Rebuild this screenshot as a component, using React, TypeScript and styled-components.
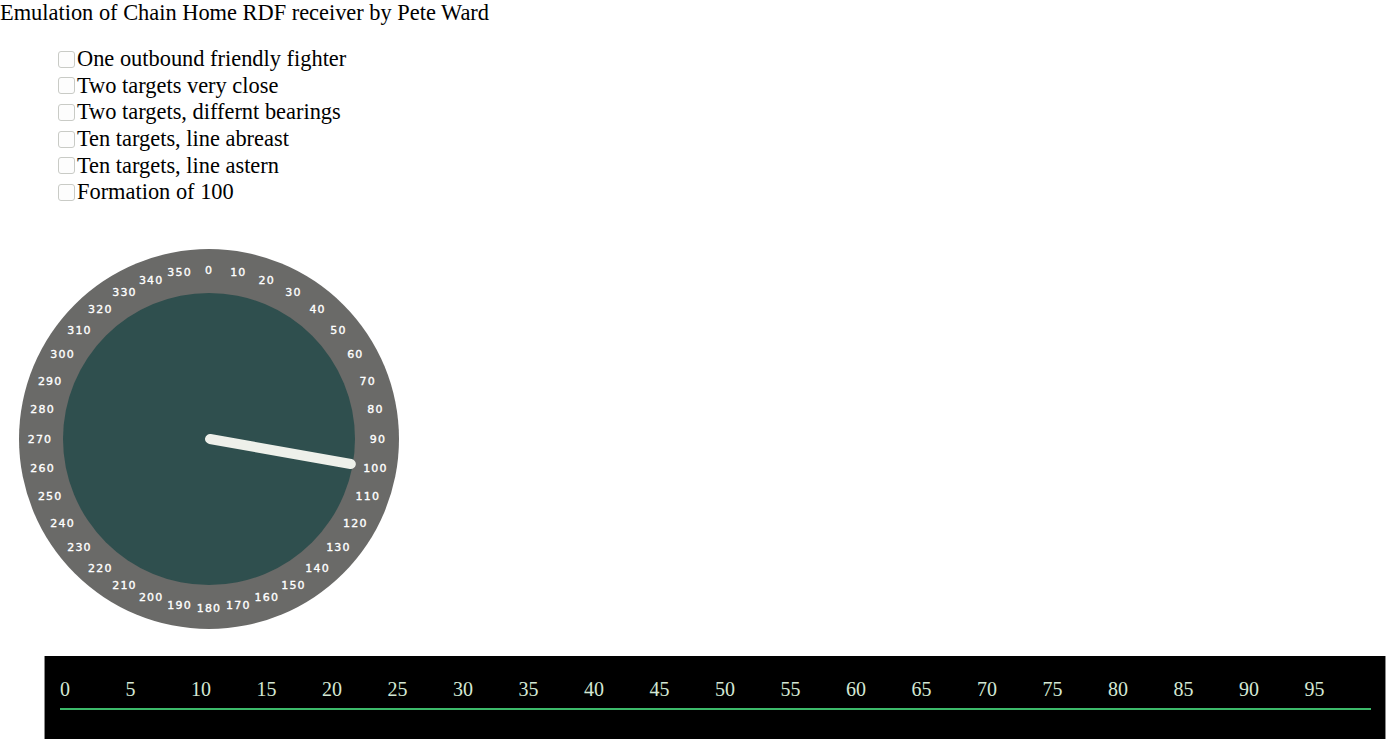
import React from "react";
import styled, { createGlobalStyle } from "styled-components";

const Global = createGlobalStyle`
  html, body { margin: 0; padding: 0; background: #ffffff; }
  body { font-family: "Liberation Serif", "Times New Roman", serif; color: #000; }
`;

const Page = styled.div`
  display: flex;
  flex-direction: column;
  width: 1400px;
`;

const Title = styled.div`
  font-size: 22.4px;
  line-height: 25px;
  height: 25px;
`;

const Options = styled.div`
  display: flex;
  flex-direction: column;
  padding-left: 58px;
  margin-top: 21px;
`;

const OptionRow = styled.label`
  display: flex;
  align-items: center;
  height: 26.6px;
  font-size: 22.4px;
  gap: 2px;
`;

const Check = styled.input`
  appearance: none;
  width: 17px;
  height: 17px;
  margin: 0;
  border: 1px solid #c9cbc6;
  border-radius: 3px;
  background: #fdfdfd;
  box-sizing: border-box;
`;

const DialWrap = styled.div`
  padding-left: 19px;
  margin-top: 43px;
  height: 380px;
`;

const Scope = styled.div`
  margin-top: 27px;
  margin-left: 44px;
  width: 1342px;
  height: 100px;
  background: #000;
  border-left: 1px solid #8a8a8a;
  border-right: 1px solid #8a8a8a;
  box-sizing: border-box;
  padding: 22px 0 0 15px;
  display: flex;
  flex-direction: column;
`;

const Scale = styled.div`
  display: flex;
  font-size: 20px;
  line-height: 23px;
  color: #d4e8d4;
`;

const Tick = styled.span`
  width: 65.5px;
  flex: none;
`;

const Trace = styled.div`
  margin-top: 7px;
  width: 1311px;
  height: 2.5px;
  background: #3cb96a;
`;

const options = [
  "One outbound friendly fighter",
  "Two targets very close",
  "Two targets, differnt bearings",
  "Ten targets, line abreast",
  "Ten targets, line astern",
  "Formation of 100",
];

const Dial: React.FC<{ bearing: number }> = ({ bearing }) => {
  const cx = 190;
  const cy = 190;
  const labels = [];
  for (let d = 0; d < 360; d += 10) {
    const a = (d * Math.PI) / 180;
    const r = 169;
    labels.push(
      <text
        key={d}
        x={cx + r * Math.sin(a)}
        y={cy - r * Math.cos(a)}
        textAnchor="middle"
        dominantBaseline="central"
        fill="#ffffff"
        stroke="#ffffff"
        strokeWidth="0.35"
        fontFamily="'DejaVu Sans', sans-serif"
        fontSize="11"
        letterSpacing="1.2"
      >
        {d}
      </text>
    );
  }
  const b = (bearing * Math.PI) / 180;
  const len = 144;
  return (
    <svg width="380" height="380" viewBox="0 0 380 380">
      <circle cx={cx} cy={cy} r={190} fill="#6a6a68" />
      <circle cx={cx} cy={cy} r={146} fill="#2f4f4e" />
      {labels}
      <line
        x1={cx + 1}
        y1={cy}
        x2={cx + len * Math.sin(b)}
        y2={cy - len * Math.cos(b)}
        stroke="#eef0ea"
        strokeWidth="10"
        strokeLinecap="round"
      />
    </svg>
  );
};

export default function App() {
  const ticks = Array.from({ length: 20 }, (_, i) => i * 5);
  return (
    <Page>
      <Global />
      <Title>Emulation of Chain Home RDF receiver by Pete Ward</Title>
      <Options>
        {options.map((o) => (
          <OptionRow key={o}>
            <Check type="checkbox" />
            {o}
          </OptionRow>
        ))}
      </Options>
      <DialWrap>
        <Dial bearing={100} />
      </DialWrap>
      <Scope>
        <Scale>
          {ticks.map((t) => (
            <Tick key={t}>{t}</Tick>
          ))}
        </Scale>
        <Trace />
      </Scope>
    </Page>
  );
}
